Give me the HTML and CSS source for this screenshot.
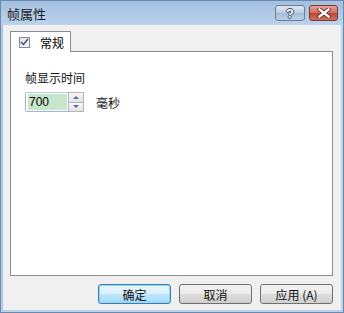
FILE: index.html
```
<!DOCTYPE html>
<html lang="zh-Hans">
<head>
  <meta charset="UTF-8">
  <title>帧属性</title>
  <link rel="stylesheet" href="styles.css">
</head>
<body>
  <div class="window">
    <!-- 标题栏 -->
    <div class="title-bar">
      <div class="title">帧属性</div>
      <div class="caption-buttons">
        <div class="cap-btn help">?</div>
        <div class="cap-btn close">
          <svg width="14" height="10" viewBox="0 0 14 10">
            <path d="M2.5 1.5 L11.5 8.5 M11.5 1.5 L2.5 8.5" stroke="#5a1f18" stroke-width="4" stroke-linecap="square"/>
            <path d="M2.5 1.5 L11.5 8.5 M11.5 1.5 L2.5 8.5" stroke="#fff" stroke-width="2.4" stroke-linecap="square"/>
          </svg>
        </div>
      </div>
    </div>

    <!-- 客户区 -->
    <div class="client">
      <div class="tabs">
        <div class="tab">
          <span class="check">
            <svg width="9" height="8" viewBox="0 0 9 8">
              <path d="M1 4 L3.5 6.5 L8 1" fill="none" stroke="#4a4a4a" stroke-width="1.4"/>
            </svg>
          </span>
          <span>常规</span>
        </div>
      </div>
      <div class="panel">
        <div class="field-label">帧显示时间</div>
        <div class="field-row">
          <div class="spin">
            <div class="spin-input">700</div>
            <div class="spin-btns">
              <div class="spin-btn"><span class="arrow-up"></span></div>
              <div class="spin-btn"><span class="arrow-down"></span></div>
            </div>
          </div>
          <span class="unit">毫秒</span>
        </div>
      </div>
      <div class="buttons">
        <div class="btn default">确定</div>
        <div class="btn">取消</div>
        <div class="btn">应用 (A)</div>
      </div>
    </div>
  </div>
</body>
</html>
```

FILE: styles.css
```
body {
  margin: 0;
  font-family: "Noto Sans CJK SC", "Liberation Sans", sans-serif;
  font-size: 12px;
}

/* 窗口外框 */
.window {
  width: 344px;
  height: 313px;
  box-sizing: border-box;
  border: 1px solid #6b88ad;
  background: linear-gradient(to bottom, #a3bfdf, #bcd3ec 25px, #bcd3ec);
  padding: 0 2px 2px 1px;
  display: flex;
  flex-direction: column;
}

.title-bar {
  height: 24px;
  display: flex;
  align-items: flex-start;
  justify-content: space-between;
}

.title {
  padding: 3px 0 0 5px;
  font-size: 13px;
  color: #1e1e1e;
}

.caption-buttons {
  display: flex;
  gap: 4px;
  padding-top: 4px;
  padding-right: 3px;
}

.cap-btn {
  height: 16px;
  border: 1px solid #6b7b93;
  border-radius: 3px;
  display: flex;
  align-items: center;
  justify-content: center;
  box-sizing: border-box;
}

.cap-btn.help {
  width: 30px;
  background: linear-gradient(to bottom, #dfe9f5, #b8cbe2 50%, #a3bad6 51%, #bcd0e8);
  color: #fff;
  font-family: "Liberation Sans", sans-serif;
  font-weight: bold;
  font-size: 13px;
  text-shadow: 1px 0 0 #3a4b63, -1px 0 0 #3a4b63, 0 1px 0 #3a4b63, 0 -1px 0 #3a4b63;
}

.cap-btn.close {
  width: 29px;
  border-color: #7a3a34;
  background: linear-gradient(to bottom, #e8a397, #cf6e5e 50%, #bb4635 51%, #d0705d);
}

/* 客户区 */
.client {
  flex: 1;
  background: #f0f0f0;
  display: flex;
  flex-direction: column;
  padding: 6px 8px 0 7px;
  border-left: 1px solid #a8c0dc;
}

.tabs {
  display: flex;
  height: 20px;
}

.tab {
  width: 61px;
  box-sizing: border-box;
  background: #fff;
  border: 1px solid #898c95;
  border-bottom: none;
  display: flex;
  align-items: center;
  padding-left: 8px;
  gap: 10px;
  position: relative;
  z-index: 1;
  height: 21px;
}

.check {
  width: 11px;
  height: 11px;
  box-sizing: border-box;
  border: 1px solid #7f8aa3;
  background: linear-gradient(135deg, #dfe3ef, #f6f7fa);
  display: flex;
  align-items: center;
  justify-content: center;
}

.panel {
  height: 225px;
  box-sizing: border-box;
  background: #fff;
  border: 1px solid #898c95;
  padding: 17px 14px 0 14px;
}

.field-label {
  color: #111;
  height: 18px;
  line-height: 18px;
}

.field-row {
  display: flex;
  align-items: center;
  margin-top: 5px;
}

.spin {
  display: flex;
  width: 59px;
  height: 20px;
  box-sizing: border-box;
  border: 1px solid #9ab6d3;
  border-top-color: #b7cfe6;
  background: #fff;
  border-radius: 2px;
}

.spin-input {
  width: 40px;
  margin: 1px 1px 1px 2px;
  background: #c8e6c9;
  font-family: "Liberation Sans", sans-serif;
  font-size: 12px;
  line-height: 16px;
  padding-left: 1px;
  box-sizing: border-box;
  color: #000;
}

.spin-btns {
  width: 15px;
  display: flex;
  flex-direction: column;
  background: #b5b5b5;
  padding: 1px;
  gap: 1px;
  margin: -1px -1px -1px 0;
}

.spin-btn {
  flex: 1;
  background: linear-gradient(to bottom, #f7f7f7, #e3e3e3);
  display: flex;
  align-items: center;
  justify-content: center;
}

.arrow-up {
  border-left: 3px solid transparent;
  border-right: 3px solid transparent;
  border-bottom: 3px solid #4c6fa0;
}

.arrow-down {
  border-left: 3px solid transparent;
  border-right: 3px solid transparent;
  border-top: 3px solid #4c6fa0;
}

.unit {
  margin-left: 12px;
  color: #111;
}

/* 底部按钮 */
.buttons {
  display: flex;
  justify-content: flex-end;
  gap: 8px;
  margin-top: 8px;
}

.btn {
  width: 73px;
  height: 20px;
  box-sizing: border-box;
  border: 1px solid #707070;
  border-radius: 3px;
  background: linear-gradient(to bottom, #f2f2f2, #ebebeb 50%, #dddddd 51%, #cfcfcf);
  display: flex;
  align-items: center;
  justify-content: center;
  color: #111;
}

.btn.default {
  border-color: #3c7fb1;
  background: linear-gradient(to bottom, #eaf6fd, #d9f0fc 50%, #bee6fd 51%, #a7d9f5);
  box-shadow: inset 0 0 0 1px #8fd3f6;
}
```
